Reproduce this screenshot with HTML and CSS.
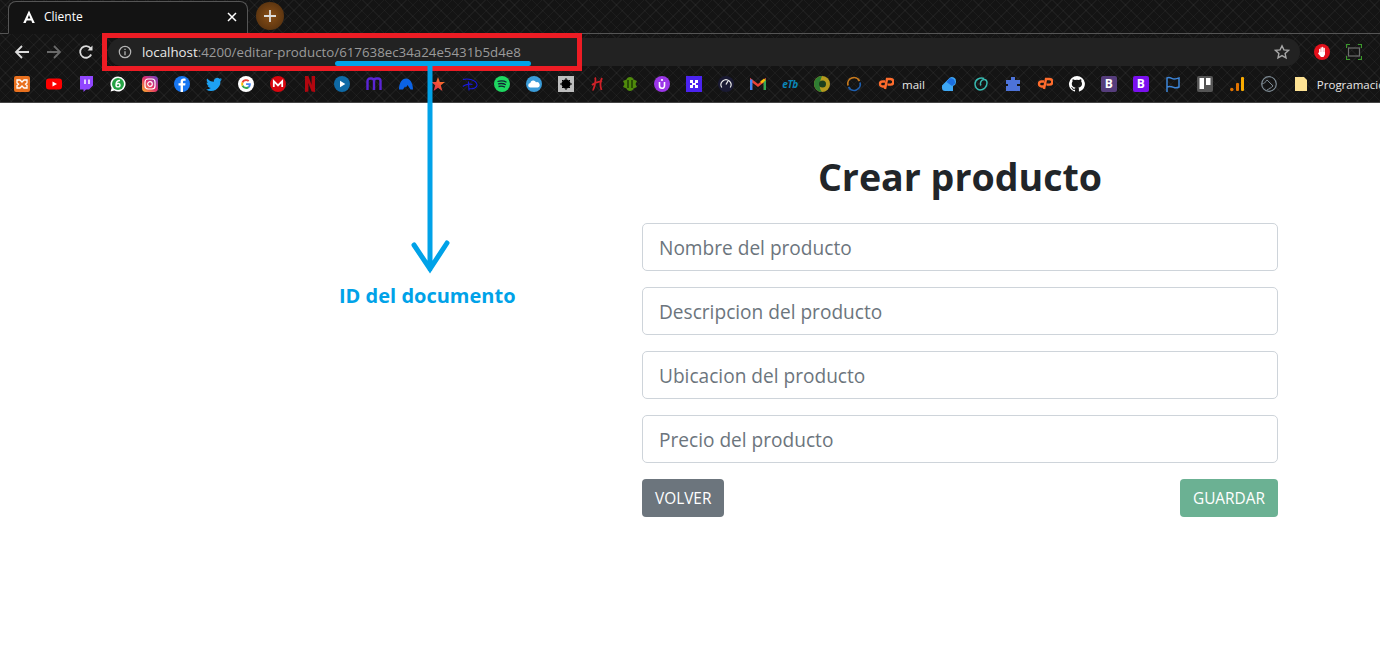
FILE: index.html

```html
<!DOCTYPE html>
<html lang="es">
<head>
  <meta charset="UTF-8">
  <title>Cliente</title>
  <link rel="stylesheet" href="styles.css">
</head>
<body>
  <div class="browser">
    <div class="tabstrip">
      <div class="tab">
        <svg class="tab-logo" viewBox="0 0 16 16"><path fill="#fff" d="M8 1.5 2.2 14h2.5l1-2.4h4.6l1 2.4h2.5zM6.6 9.5 8 6l1.4 3.5z"/></svg>
        <span class="tab-title">Cliente</span>
        <svg class="tab-close" viewBox="0 0 10 10"><path d="M1 1l8 8M9 1l-8 8" stroke="#fff" stroke-width="1.5"/></svg>
      </div>
      <div class="newtab">
        <svg viewBox="0 0 14 14"><path d="M7 1v12M1 7h12" stroke="#ddd" stroke-width="1.8"/></svg>
      </div>
    </div>

    <div class="toolbar">
      <svg class="nav-icon" viewBox="0 0 16 16"><path d="M15 8H2M8 2 2 8l6 6" fill="none" stroke="#dcdcdc" stroke-width="1.8"/></svg>
      <svg class="nav-icon" viewBox="0 0 16 16"><path d="M1 8h13M8 2l6 6-6 6" fill="none" stroke="#6a6a6a" stroke-width="1.8"/></svg>
      <svg class="nav-icon" viewBox="0 0 16 16"><path d="M13.2 10.5A5.8 5.8 0 1 1 12.6 4.4" fill="none" stroke="#dcdcdc" stroke-width="1.8"/><path d="M14.5 1.5v5h-5z" fill="#dcdcdc"/></svg>
      <div class="omnibox">
        <svg class="info-icon" viewBox="0 0 14 14"><circle cx="7" cy="7" r="5.7" fill="none" stroke="#b5b5b5" stroke-width="1.2"/><path d="M7 6.2v4M7 3.8v1.3" stroke="#b5b5b5" stroke-width="1.3"/></svg>
        <span class="url"><span class="url-host">localhost</span>:4200/editar-producto/617638ec34a24e5431b5d4e8</span>
        <svg class="star" viewBox="0 0 16 16"><path d="M8 1.8l1.9 4.1 4.5.5-3.3 3 .9 4.4L8 11.6l-4 2.2.9-4.4-3.3-3 4.5-.5z" fill="none" stroke="#a8a8a8" stroke-width="1.4"/></svg>
      </div>
      <div class="extensions">
        <svg viewBox="0 0 16 16"><circle cx="8" cy="8" r="8" fill="#e3101b"/><path d="M5.7 9V5.500M7.200 9V3.800M8.700 9V3.500M10.200 9V4.500" stroke="#fff" stroke-width="1.300" stroke-linecap="round"/><path d="M5 8h6v2.500L9.500 13H7L4 9.500l.6-.8z" fill="#fff"/></svg>
        <svg viewBox="0 0 16 16"><path d="M.5 4V.5H4M12 .5h3.500V4M15.500 12v3.500H12M4 15.500H.5V12" fill="none" stroke="#3c9a2c" stroke-width="1.2"/><rect x="2.500" y="4" width="11" height="8" fill="none" stroke="#6e6e6e" stroke-width="1.2"/></svg>
      </div>
    </div>

    <div class="bookmarks">
      <svg viewBox="0 0 16 16"><rect width="16" height="16" rx="2" fill="#e8701e"/><path d="M3 4h3l2 2 2-2h3v3l-1.500 1L13 9.500V12h-3L8 10l-2 2H3V9.500L4.500 8 3 7z" fill="none" stroke="#fff" stroke-width="1.300"/></svg>
      <svg viewBox="0 0 16 16"><rect y="2.500" width="16" height="11" rx="3" fill="#f00"/><path d="M6.500 5.500v5L11 8z" fill="#fff"/></svg>
      <svg viewBox="0 0 16 16"><path d="M2 0h13v9.500L11 13.500H8L5.500 16v-2.500H2z" fill="#9146ff"/><path d="M7 3.500v4.500M11 3.500v4.500" stroke="#fff" stroke-width="1.500"/></svg>
      <svg viewBox="0 0 16 16"><path d="M8 .5a7.500 7.500 0 0 0-6.400 11.400L.6 15.500l3.700-1A7.500 7.500 0 1 0 8 .5z" fill="#fff"/><circle cx="8" cy="8" r="6" fill="#25a244"/><path d="M10 4.500C7.500 4.500 6 6 6 9c0 2.500 4 2.500 4 0 0-2-2.500-2-4-.5" fill="none" stroke="#fff" stroke-width="1.400"/></svg>
      <svg viewBox="0 0 16 16"><defs><linearGradient id="ig" x1="0" y1="1" x2="1" y2="0"><stop offset="0" stop-color="#fdb32b"/><stop offset=".5" stop-color="#e1306c"/><stop offset="1" stop-color="#6a45c9"/></linearGradient></defs><rect width="16" height="16" rx="4" fill="url(#ig)"/><rect x="3" y="3" width="10" height="10" rx="3" fill="none" stroke="#fff" stroke-width="1.200"/><circle cx="8" cy="8" r="2.300" fill="none" stroke="#fff" stroke-width="1.200"/></svg>
      <svg viewBox="0 0 16 16"><circle cx="8" cy="8" r="8" fill="#1877f2"/><path d="M9 16V9.500h2.200l.3-2.300H9V6c0-.8.300-1.200 1.200-1.200h1.400V2.700C11 2.600 10.400 2.600 9.800 2.600 7.800 2.600 6.600 3.800 6.600 5.700v1.500H4.500v2.300h2.100V16z" fill="#fff"/></svg>
      <svg viewBox="0 0 16 16"><path d="M16 3.300c-.6.300-1.200.4-1.900.5.700-.4 1.200-1 1.400-1.800-.6.400-1.300.6-2 .8A3.300 3.300 0 0 0 7.900 5.800C5.200 5.700 2.800 4.400 1.100 2.400.3 3.900.7 5.800 2.100 6.800c-.5 0-1-.2-1.500-.4 0 1.600 1.100 3 2.600 3.300-.5.100-1 .1-1.500 0 .4 1.300 1.600 2.200 3.100 2.300A6.600 6.600 0 0 1 0 13.400 9.300 9.300 0 0 0 14.400 5c.6-.4 1.200-1 1.600-1.700z" fill="#1da1f2"/></svg>
      <svg viewBox="0 0 16 16"><circle cx="8" cy="8" r="8" fill="#fff"/><path d="M12.800 8.200c0-.4 0-.7-.1-1H8.100v1.900h2.700c-.1.600-.5 1.200-1 1.500l1.500 1.200c.9-.8 1.500-2.100 1.500-3.600z" fill="#4285f4"/><path d="M8.100 13c1.300 0 2.400-.4 3.200-1.200l-1.500-1.200c-.4.300-1 .5-1.700.5-1.300 0-2.400-.9-2.800-2L3.700 10.300A5 5 0 0 0 8.100 13z" fill="#34a853"/><path d="M5.300 9.100a3 3 0 0 1 0-2L3.700 5.800a5 5 0 0 0 0 4.500z" fill="#fbbc05"/><path d="M8.100 5c.7 0 1.400.3 1.900.8l1.400-1.400A5 5 0 0 0 3.700 5.800l1.600 1.300c.4-1.200 1.500-2.100 2.800-2.100z" fill="#ea4335"/></svg>
      <svg viewBox="0 0 16 16"><circle cx="8" cy="8" r="8" fill="#d9060f"/><path d="M3.800 11V5.200L8 9.500l4.200-4.300V11" fill="none" stroke="#fff" stroke-width="1.800"/></svg>
      <svg viewBox="0 0 16 16"><path d="M3 0h3.400l3.200 9V0H13v16l-3.400-.5L6.400 7v8.500L3 16z" fill="#b1060f"/></svg>
      <svg viewBox="0 0 16 16"><circle cx="8" cy="8" r="8" fill="#0f6aa6"/><path d="M6 4.800v6.400L11.300 8z" fill="#fff"/></svg>
      <svg viewBox="0 0 16 16"><path d="M1.500 14V5a2.500 2.500 0 0 1 2.500-2.500h1A2.500 2.500 0 0 1 8 5v9M8 5a2.500 2.500 0 0 1 2.500-2.500h1.500A2.500 2.500 0 0 1 14.500 5v9" fill="none" stroke="#5a24d6" stroke-width="2.400"/></svg>
      <svg viewBox="0 0 16 16"><path d="M1 13.500C1 7 4 2.500 8 2.500s7 4.500 7 11h-2.500L9.500 9 8 11.500 7 10.500 5 13.500z" fill="#0b63e5"/></svg>
      <svg viewBox="0 0 16 16"><defs><linearGradient id="st" x1="0" y1="1" x2="1" y2="0"><stop offset="0" stop-color="#e0184f"/><stop offset="1" stop-color="#ff8a1e"/></linearGradient></defs><path d="M8 1l1.800 5H15l-4.200 3.200L12.400 15 8 11.700 3.600 15l1.600-5.800L1 6h5.200z" fill="url(#st)"/></svg>
      <svg viewBox="0 0 16 16"><path d="M1 3.500C6 2 14 4 15 8.500c.6 3-4 5-8 4M6.500 5.500l.5 9M0.800 10.500C3 8.500 8 7.500 10.500 8.500" fill="none" stroke="#1a1ae0" stroke-width="1.100"/></svg>
      <svg viewBox="0 0 16 16"><circle cx="8" cy="8" r="8" fill="#1ed760"/><path d="M3.500 5.500c3-1 6.500-.8 9 .7M4 8c2.700-.8 5.500-.6 7.800.7M4.500 10.500c2.300-.6 4.500-.4 6.500.6" fill="none" stroke="#123" stroke-width="1.300"/></svg>
      <svg viewBox="0 0 16 16"><circle cx="8" cy="8" r="8" fill="#3a9bd8"/><path d="M4.500 11.500a2.200 2.200 0 0 1-.2-4.400 3 3 0 0 1 5.700-.8 2.600 2.600 0 0 1 1.800 5.200z" fill="#fff"/></svg>
      <svg viewBox="0 0 16 16"><rect width="16" height="16" fill="#bdbdbd"/><circle cx="8" cy="8" r="4.500" fill="#000"/><path d="M8 2v12M2 8h12M4 4l8 8M12 4l-8 8" stroke="#000" stroke-width="1"/></svg>
      <svg viewBox="0 0 16 16"><path d="M5 1.500C6 3 5.500 6 4.500 10 4 12 3.500 14 2.500 14M12 2c-1.500 3-2 8-.5 12M2 9c3-3 7-3 10-4" fill="none" stroke="#d02128" stroke-width="1.800"/></svg>
      <svg viewBox="0 0 16 16"><path d="M8 1c2 0 3 1 3.500 2.500L15 5l-1.500 3L15 11l-3.500 1.500C11 14 10 15 8 15s-3-1-3.500-2.500L1 11l1.500-3L1 5l3.500-1.500C5 2 6 1 8 1z" fill="#4f8a0b"/><path d="M6 4v8M10 4v8" stroke="#1d3a05" stroke-width="1.500"/></svg>
      <svg viewBox="0 0 16 16"><circle cx="8" cy="8" r="8" fill="#9b36e8"/><path d="M5.500 6v3.800a2.500 2.500 0 0 0 5 0V6" fill="none" stroke="#fff" stroke-width="1.600"/><circle cx="8" cy="4" r="1.100" fill="#fff"/></svg>
      <svg viewBox="0 0 16 16"><rect width="16" height="16" fill="#4b23f0"/><path d="M4 4h3v3h2V4h3v3h-2v2h2v3H9V9H7v3H4V9h2V7H4z" fill="#fff"/></svg>
      <svg viewBox="0 0 16 16"><circle cx="8" cy="8" r="8" fill="#1a1a33"/><path d="M3.800 11.500a5 5 0 1 1 8.400 0" fill="none" stroke="#e8e8e8" stroke-width="1.200"/><path d="M8 8.500l2-3.500" stroke="#e8e8e8" stroke-width="1.300"/></svg>
      <svg viewBox="0 0 16 16"><path d="M1 14V4l7 5.500L15 4v10" fill="none" stroke="#ea4335" stroke-width="2.400"/><path d="M1.200 14V3.500" stroke="#4285f4" stroke-width="2.400"/><path d="M14.800 14V3.500" stroke="#34a853" stroke-width="2.400"/><path d="M11 6.500l3.800-3" stroke="#fbbc05" stroke-width="2.400"/></svg>
      <span class="etb-icon">eTb</span>
      <svg viewBox="0 0 16 16"><circle cx="8" cy="8" r="8" fill="#b59a1e"/><path d="M8 0a8 8 0 0 0 0 16c-3-3-3-9 0-16z" fill="#2f7d32"/><circle cx="8.500" cy="8" r="3.500" fill="#1c3f1d"/></svg>
      <svg viewBox="0 0 16 16"><path d="M2 9.500A6.200 6.200 0 0 1 13.500 5" fill="none" stroke="#c77a1e" stroke-width="1.800"/><path d="M14 6.500A6.200 6.200 0 0 1 2.500 11" fill="none" stroke="#1f5fae" stroke-width="1.800"/></svg>
      <span class="mark">
        <svg viewBox="0 0 16 16"><path d="M7 5.500H4.500a2.500 2.500 0 0 0 0 5H7M7 13l2-10h3.500a2.800 2.800 0 0 1 0 5.600H9.500" fill="none" stroke="#ff6c2c" stroke-width="2.400"/></svg>
        <span class="mark-label">mail</span>
      </span>
      <svg viewBox="0 0 16 16"><path d="M1 9.500 8.500 2a4 4 0 0 1 6.500 3.500c0 2-1 3.500-3 4.500v5H4a3 3 0 0 1-3-3z" fill="#3ea8f5"/><path d="M5.500 6 8.500 2.500c3-1 6 1.500 5.500 5L11 10z" fill="#1c6fe0"/></svg>
      <svg viewBox="0 0 16 16"><path d="M11 2.500C7 1 2 3.500 2 8c0 3.500 2.500 6 5 6 3.500 0 7-3 7-7 0-2-1-3.500-3-3.500-3 0-4.500 4-3 6" fill="none" stroke="#37b9b0" stroke-width="1.500"/></svg>
      <svg viewBox="0 0 16 16"><path d="M6 1h4v3h5v4h-3v2h3v5H1v-5h2V8H1V4h5z" fill="#4d73d9"/></svg>
      <svg viewBox="0 0 16 16"><path d="M7 5.500H4.500a2.500 2.500 0 0 0 0 5H7M7 13l2-10h3.500a2.800 2.800 0 0 1 0 5.600H9.500" fill="none" stroke="#ff6c2c" stroke-width="2.400"/></svg>
      <svg viewBox="0 0 16 16"><path d="M8 0a8 8 0 0 0-2.500 15.600c.4.100.5-.2.500-.4v-1.400c-2.200.5-2.700-1-2.700-1-.4-.9-.9-1.200-.9-1.200-.7-.5.100-.5.100-.5.800.1 1.200.8 1.200.8.700 1.200 1.900.9 2.300.7.100-.5.300-.9.500-1.100-1.800-.2-3.700-.9-3.700-4 0-.9.300-1.600.8-2.100-.1-.2-.4-1 .1-2.100 0 0 .7-.2 2.200.8a7.600 7.600 0 0 1 4 0c1.500-1 2.200-.8 2.200-.8.500 1.100.2 1.900.1 2.100.5.600.8 1.300.8 2.100 0 3.100-1.900 3.800-3.700 4 .3.300.6.800.6 1.500v2.200c0 .2.100.5.500.4A8 8 0 0 0 8 0z" fill="#fff"/></svg>
      <span class="bs-icon bs-dark">B</span>
      <span class="bs-icon bs-bright">B</span>
      <svg viewBox="0 0 16 16"><path d="M2 16V2c3-1.500 5 1 7 1s3-.5 5-1v9c-2 1-3.500 1-5 .5S5 10 2 11" fill="none" stroke="#3d85d8" stroke-width="1.500"/></svg>
      <svg viewBox="0 0 16 16"><rect width="16" height="16" rx="2" fill="#555"/><rect x="2.500" y="2" width="4.500" height="11" fill="#fff"/><rect x="9" y="2" width="4.500" height="7" fill="#fff"/></svg>
      <svg viewBox="0 0 16 16"><rect x="12" y="1" width="3" height="14" rx="1" fill="#f9ab00"/><rect x="7" y="7" width="3" height="8" rx="1" fill="#e37400"/><circle cx="2.800" cy="13.500" r="1.700" fill="#e37400"/></svg>
      <svg viewBox="0 0 16 16"><circle cx="8" cy="8" r="7.300" fill="none" stroke="#7d8a93" stroke-width="1.200"/><path d="M1 8c2-.5 4-2 5-4l6 6c-2 2-4 3-6 4" fill="none" stroke="#7d8a93" stroke-width="1"/></svg>
      <span class="mark">
        <svg viewBox="0 0 16 16"><path d="M2 1h9l3 3v11H2z" fill="#fde293"/></svg>
        <span class="mark-label">Programacion</span>
      </span>
    </div>
  </div>

  <main class="page">
    <form class="product-form">
      <h1 class="form-title">Crear producto</h1>
      <input class="field" type="text" placeholder="Nombre del producto">
      <input class="field" type="text" placeholder="Descripcion del producto">
      <input class="field" type="text" placeholder="Ubicacion del producto">
      <input class="field" type="text" placeholder="Precio del producto">
      <div class="form-actions">
        <button class="btn btn-back" type="button">VOLVER</button>
        <button class="btn btn-save" type="button">GUARDAR</button>
      </div>
    </form>
  </main>

  <!-- anotaciones sobre la captura -->
  <div class="note-box"></div>
  <div class="note-underline"></div>
  <svg class="note-arrow" width="44" height="212" viewBox="0 0 44 212"><path d="M22 0V204M6 180l16 24 17-26" fill="none" stroke="#00a2e8" stroke-width="5" stroke-linecap="round"/></svg>
  <div class="note-label">ID del documento</div>
</body>
</html>
```

FILE: styles.css

```css
* { box-sizing: border-box; }
html, body { height: 100%; }
body { margin: 0; background: #fff; font-family: 'Open Sans', sans-serif; color: #212529; overflow: hidden; position: relative; }

/* barra del navegador */
.browser {
  height: 103px;
  background-color: #141414;
  background-image:
    repeating-linear-gradient(45deg, rgba(255,255,255,.04) 0 1px, transparent 1px 8px),
    repeating-linear-gradient(-45deg, rgba(255,255,255,.04) 0 1px, transparent 1px 8px);
  border-bottom: 1px solid #444;
}
.tabstrip { height: 34px; display: flex; align-items: flex-end; padding-left: 8px; border-bottom: 1px solid #555; }
.tab { width: 240px; height: 33px; margin-bottom: -1px; padding: 0 8px 2px 12px; background-color: #131313; border: 1px solid #555; border-bottom: 1px solid #131313; border-radius: 8px 8px 0 0; display: flex; align-items: center; color: #fff; font-size: 12px; }
.tab-logo { width: 16px; height: 16px; }
.tab-title { margin-left: 7px; flex: 1; }
.tab-close { width: 10px; height: 10px; margin-right: 2px; }
.newtab { width: 28px; height: 28px; margin: 0 0 3px 8px; border-radius: 50%; background: radial-gradient(circle, #8a4f17, #4b2b0d); display: flex; align-items: center; justify-content: center; }
.newtab svg { width: 14px; height: 14px; }

.toolbar { height: 34px; padding: 2px 0 0 14px; display: flex; align-items: center; }
.nav-icon { width: 16px; height: 16px; margin-right: 16px; }
.toolbar .nav-icon:nth-child(3) { margin-right: 14px; }
.omnibox { width: 1192px; height: 28px; background: #222; border-radius: 14px; display: flex; align-items: center; padding: 0 10px; }
.info-icon { width: 14px; height: 14px; margin-right: 10px; }
.url { flex: 1; font-size: 13.3px; color: #9a9a9a; white-space: nowrap; }
.url-host { color: #e8e8e8; }
.star { width: 16px; height: 16px; }
.extensions { display: flex; gap: 16px; margin-left: 14px; }
.extensions svg { width: 16px; height: 16px; }

.bookmarks { height: 34px; padding: 0 0 2px 14px; display: flex; align-items: center; gap: 16px; white-space: nowrap; }
.bookmarks svg { width: 16px; height: 16px; flex: none; }
.mark { display: flex; align-items: center; gap: 8px; }
.mark-label { color: #e8e8e8; font-size: 11.5px; }
.bs-icon { width: 16px; height: 16px; flex: none; border-radius: 2px; color: #fff; font: bold 12px/16px 'Open Sans', sans-serif; text-align: center; }
.bs-dark { background: #563d7c; }
.bs-bright { background: #7a10ee; }
.etb-icon { width: 16px; flex: none; color: #0a86b8; font: italic bold 10px/16px 'Open Sans', sans-serif; letter-spacing: -.5px; text-align: center; white-space: nowrap; }

/* formulario */
.page { display: flex; justify-content: flex-end; padding-right: 102px; }
.product-form { width: 636px; display: flex; flex-direction: column; gap: 16px; }
.form-title { margin: 46px 0 2px; font-size: 37.6px; line-height: 56px; font-weight: 700; text-align: center; }
.field { height: 48px; padding: 2px 16px 0; font: 19.1px 'Open Sans', sans-serif; color: #212529; border: 1px solid #ced4da; border-radius: 5px; background: #fff; }
.field::placeholder { color: #6c757d; opacity: 1; }
.form-actions { display: flex; justify-content: space-between; }
.btn { height: 38px; padding: 0 13px; border: none; border-radius: 4px; color: #fff; font: 15.4px 'Open Sans', sans-serif; }
.btn-back { background: #6c757d; }
.btn-save { background: #6bb193; }

/* anotaciones */
.note-box { position: absolute; left: 102px; top: 33px; width: 480px; height: 38px; border: 5px solid #ed1c24; }
.note-underline { position: absolute; left: 335px; top: 61px; width: 196px; height: 5px; background: #00a2e8; border-radius: 3px; }
.note-arrow { position: absolute; left: 408px; top: 65px; }
.note-label { position: absolute; left: 339px; top: 282px; font-size: 20px; line-height: 28px; font-weight: 700; color: #00a2e8; white-space: nowrap; }
```
